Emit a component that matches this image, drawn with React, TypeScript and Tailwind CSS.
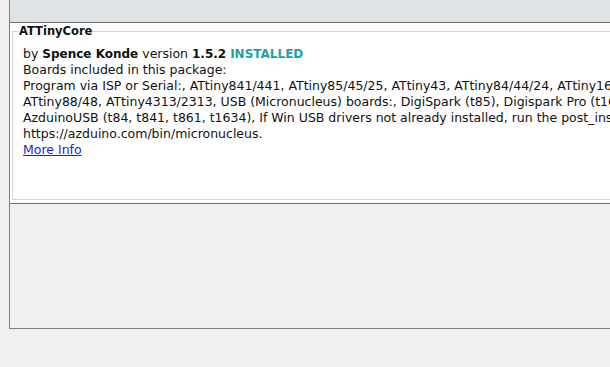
export default function App() {
  const font = { fontFamily: '"DejaVu Sans", Verdana, sans-serif' };
  return (
    <div className="w-[610px] h-[367px] overflow-hidden bg-[#f0f0f0]" style={font}>
      <div className="ml-[9px] w-[900px] h-[329px] flex flex-col border-l border-b border-[#7f7f7f]">
        <div className="h-[23px] shrink-0 bg-[#dee3e6] border-b border-[#6f6f6f]" />
        <div className="h-[180px] shrink-0 bg-white pl-[2px] pt-[1px] pb-[3px] flex">
          <fieldset className="flex-1 border border-[#d5d5d5] pl-[6px] m-0 min-w-0">
            <legend className="px-0 text-[11.5px] font-bold text-[#111] leading-[14px]">ATTinyCore</legend>
            <div className="pl-[4px] text-[12.5px] leading-[16px] text-[#111] whitespace-nowrap pt-[8px]">
              <div>
                by <b className="text-[12px]">Spence Konde</b> version <b className="text-[12px]">1.5.2</b>{" "}
                <b className="text-[12px] text-[#22a0a4]">INSTALLED</b>
              </div>
              <div>Boards included in this package:</div>
              <div>Program via ISP or Serial:, ATtiny841/441, ATtiny85/45/25, ATtiny43, ATtiny84/44/24, ATtiny1634, ATtiny861/461/261,</div>
              <div>ATtiny88/48, ATtiny4313/2313, USB (Micronucleus) boards:, DigiSpark (t85), Digispark Pro (t167), MH-Tiny (t88),</div>
              <div>AzduinoUSB (t84, t841, t861, t1634), If Win USB drivers not already installed, run the post_install.bat from</div>
              <div>https://azduino.com/bin/micronucleus.</div>
              <div>
                <span className="text-[#2222cc] underline">More Info</span>
              </div>
            </div>
          </fieldset>
        </div>
        <div className="flex-1 border-t border-[#6f6f6f] bg-[#f0f0f0]" />
      </div>
    </div>
  );
}
